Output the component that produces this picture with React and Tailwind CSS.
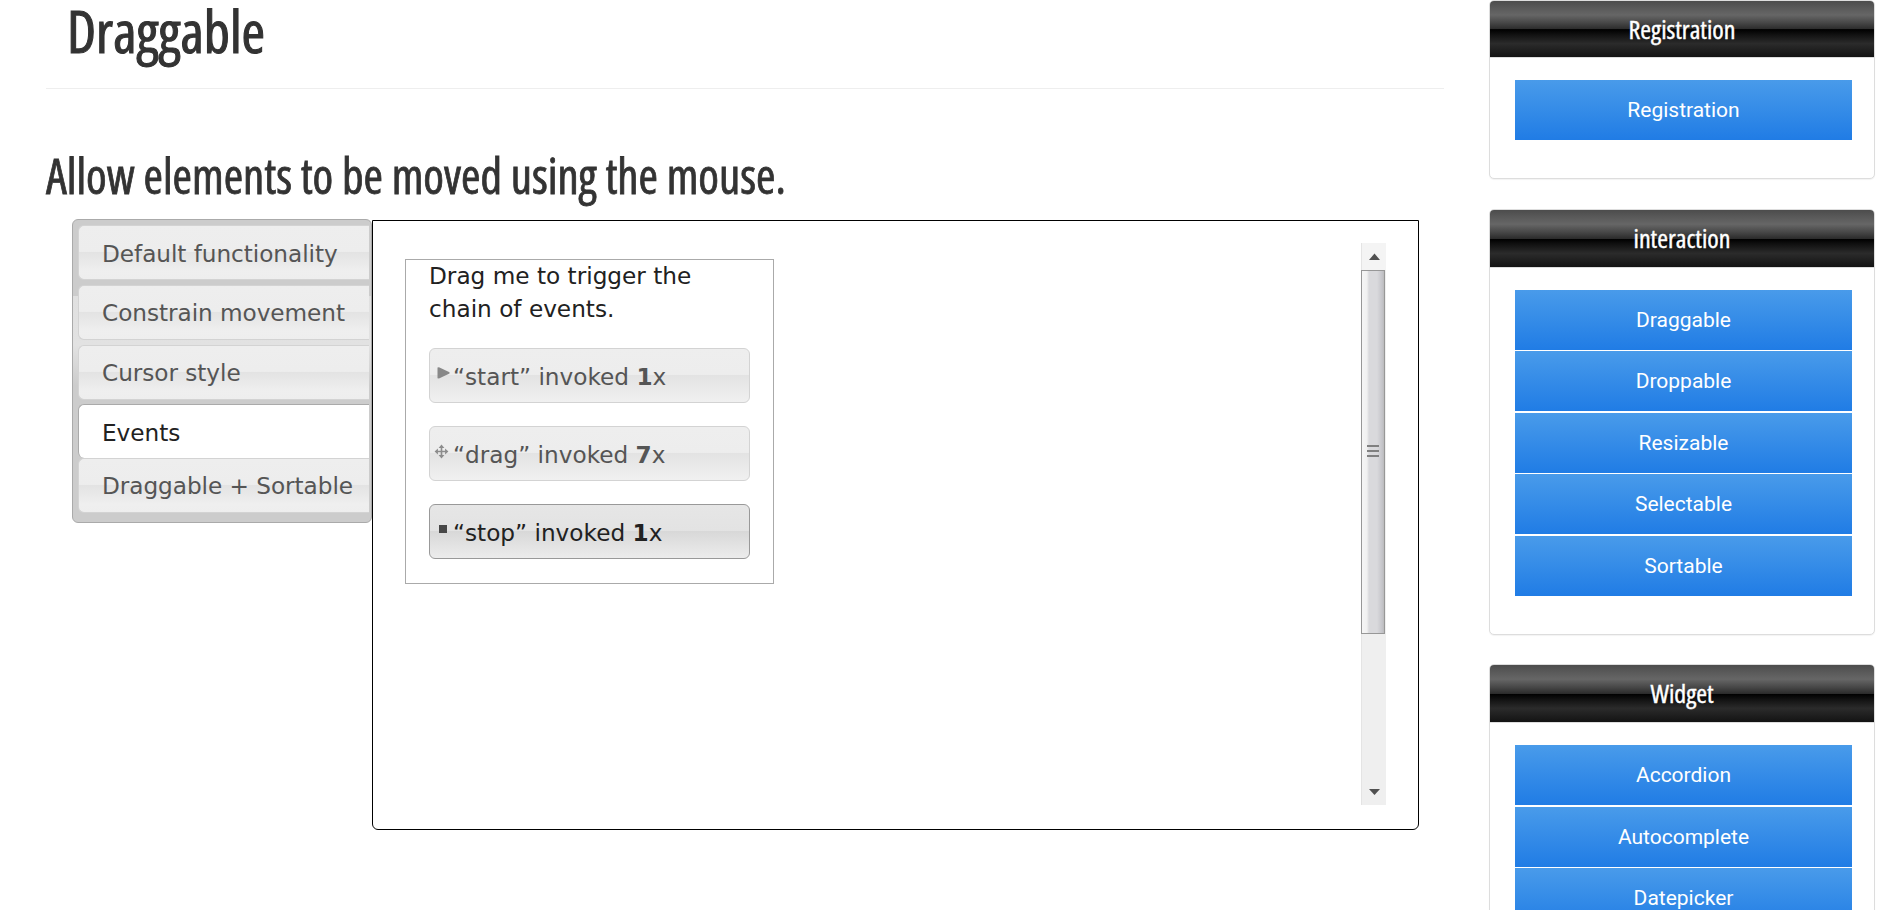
const tabs = [
  { label: "Default functionality", cls: "h-[55px] pt-[11px]" },
  { label: "Constrain movement", cls: "mt-[5px] h-[55px] pt-[10px]" },
  { label: "Cursor style", cls: "mt-[5px] h-[55px] pt-[10px]" },
  { label: "Events", cls: "mt-1 h-[54px] pt-[11px]", active: true },
  { label: "Draggable + Sortable", cls: "h-[55px] pt-[10px]" },
];

const PlayIcon = () => (
  <svg className="mt-[18px] ml-[7px] h-3 w-[13px]" viewBox="0 0 13 12">
    <path d="M0.5 0.5 L2 0.3 L12.5 5.2 V6.6 L2 11.5 L0.5 11.3 Z" fill="#888" />
  </svg>
);

const MoveIcon = () => (
  <svg className="mt-[17px] ml-[4px] h-[15px] w-[15px]" viewBox="0 0 15 15">
    <path d="M7.5 0.6 L10.4 3.9 H4.6 Z M7.5 14.4 L10.4 11.1 H4.6 Z M0.6 7.5 L3.9 4.6 V10.4 Z M14.4 7.5 L11.1 4.6 V10.4 Z" fill="#8c8c8c" />
    <path d="M7.5 3 V12 M3 7.5 H12" stroke="#8c8c8c" strokeWidth="1.6" />
  </svg>
);

const StopIcon = () => (
  <svg className="mt-[20px] ml-[9px] h-2 w-2" viewBox="0 0 8 8">
    <rect width="8" height="8" fill="#484848" />
  </svg>
);

const events = [
  { name: "start", count: 1, Icon: PlayIcon, cls: "mt-[23px]" },
  { name: "drag", count: 7, Icon: MoveIcon, cls: "mt-[23px]" },
  { name: "stop", count: 1, Icon: StopIcon, cls: "mt-[23px]", hover: true },
];

const panels = [
  { title: "Registration", cls: "h-[179px]", head: "h-[57px]", items: ["Registration"] },
  { title: "interaction", cls: "mt-[30px] h-[426px]", head: "h-[58px]", items: ["Draggable", "Droppable", "Resizable", "Selectable", "Sortable"] },
  { title: "Widget", cls: "mt-[29.1px] h-[600px]", head: "h-[58px]", items: ["Accordion", "Autocomplete", "Datepicker"] },
];

function Tab({ label, cls, active }) {
  const tone = active
    ? "border-t border-l border-[#aaa] bg-white text-[#212121]"
    : "border-y border-l border-[#d3d3d3] bg-[linear-gradient(#eee_0%,#ededed_48%,#e3e3e3_50%,#efefef_85%,#eee_100%)] text-[#555]";
  return (
    <div className={`${cls} ${tone} shrink-0 rounded-l-[6px] pl-[23px] text-[23.2px] leading-[33px] tracking-[-0.05px] whitespace-nowrap`}>
      {label}
    </div>
  );
}

function EventRow({ name, count, Icon, cls, hover }) {
  const tone = hover
    ? "border-[#999] bg-[linear-gradient(#e6e6e6_0%,#e3e3e3_48%,#d8d8d8_50%,#ececec_100%)] text-[#212121]"
    : "border-[#d3d3d3] bg-[linear-gradient(#eee_0%,#ededed_48%,#e3e3e3_50%,#f0f0f0_100%)] text-[#555]";
  return (
    <div className={`${cls} ${tone} flex h-[55px] w-[321px] rounded-[6px] border`}>
      <div className="w-[23px] shrink-0">
        <Icon />
      </div>
      <div className="pt-[11px] text-[23.2px] leading-[33px] whitespace-pre">
        “{name}” invoked <b>{count}</b>x
      </div>
    </div>
  );
}

function Scrollbar() {
  return (
    <div className="mt-[22px] flex h-[562px] w-[25px] flex-col border-l border-[#e4e4e4] bg-[#efefef]">
      <div className="flex h-[27px] items-start justify-center bg-[#f4f4f4] pt-[10px]">
        <svg className="h-[7px] w-[11px]" viewBox="0 0 11 7">
          <path d="M5.5 0.5 L11 7 H0 Z" fill="#505050" />
        </svg>
      </div>
      <div className="-ml-px flex h-[364px] w-[24px] flex-col justify-center gap-[3px] border border-[#979797] bg-[linear-gradient(90deg,#f5f5f5_0%,#f1f1f1_22%,#d9d9dc_32%,#d9d9dc_68%,#c4c4c9_92%,#bbb_100%)] pb-[3px] pl-[5px]">
        <div className="h-[2px] w-3 bg-[#808080]" />
        <div className="h-[2px] w-3 bg-[#808080]" />
        <div className="h-[2px] w-3 bg-[#808080]" />
      </div>
      <div className="flex flex-1 items-end justify-center pb-[10px]">
        <svg className="h-[6px] w-[11px]" viewBox="0 0 11 6">
          <path d="M0 0 H11 L5.5 6 Z" fill="#505050" />
        </svg>
      </div>
    </div>
  );
}

function Panel({ title, cls, head, items }) {
  return (
    <section className={`${cls} w-[386px] shrink-0 rounded-[5px] border border-[#ddd] bg-white shadow-[0_1px_1px_rgba(0,0,0,0.05)]`}>
      <h3 className={`${head} rounded-t-[4px] border-b border-[#ddd] bg-[linear-gradient(#4c4c4c_0%,#595959_12%,#666666_25%,#474747_39%,#2c2c2c_50%,#000000_51%,#111111_60%,#2b2b2b_76%,#1c1c1c_91%,#131313_100%)] bg-clip-padding text-center font-['Open_Sans',sans-serif] text-[26px] leading-[57px] text-white [-webkit-text-stroke:0.4px_white] [font-stretch:75%]`}>
        {title}
      </h3>
      <ul className="ml-[25px] flex w-[337px] flex-col gap-[1.44px] pt-[22px]">
        {items.map((item) => (
          <li
            key={item}
            className="h-[60px] shrink-0 bg-[linear-gradient(#499bea_0%,#207ce5_100%)] text-center font-['Roboto',sans-serif] text-[21px] leading-[60px] text-white"
          >
            {item}
          </li>
        ))}
      </ul>
    </section>
  );
}

export default function App() {
  return (
    <div className="flex h-[910px] w-[1894px] overflow-hidden bg-white font-['DejaVu_Sans',sans-serif]">
      <main className="ml-[46px] w-[1398px] shrink-0">
        <div className="h-[89px] border-b border-[#eee] pl-[21px]">
          <h1 className="origin-left scale-x-[0.965] font-['Open_Sans',sans-serif] text-[59px] leading-[61px] text-[#333] [-webkit-text-stroke:1.1px_#333] [font-stretch:75%]">
            Draggable
          </h1>
        </div>
        <h2 className="mt-[56px] origin-left scale-x-[0.94] font-['Open_Sans',sans-serif] text-[50px] leading-[60px] whitespace-nowrap text-[#333] [-webkit-text-stroke:0.8px_#333] [font-stretch:75%]">
          Allow elements to be moved using the mouse.
        </h2>
        <div className="mt-[14px] ml-[26px] flex items-start">
          <nav className="flex h-[304px] w-[300px] flex-col rounded-[6px] border border-[#aaa] bg-[linear-gradient(#ccc_0px,#ccc_76px,#e0e0e0_76px,#e2e2e2_125px,#ccc_165px,#ccc_100%)] pt-[5px] pr-[2px] pl-[5px]">
            {tabs.map((t) => (
              <Tab key={t.label} {...t} />
            ))}
          </nav>
          <div className="mt-px flex h-[610px] w-[1047px] justify-between rounded-[6px] rounded-t-none border border-black pr-[32px] pl-[32px]">
            <div className="mt-[38px] h-[325px] w-[369px] border border-[#aaa] pl-[23px]">
              <p className="-mt-px w-[300px] text-[23.2px] leading-[33px] text-[#212121]">
                Drag me to trigger the chain of events.
              </p>
              {events.map((e) => (
                <EventRow key={e.name} {...e} />
              ))}
            </div>
            <Scrollbar />
          </div>
        </div>
      </main>
      <aside className="ml-[45px] flex flex-col">
        {panels.map((p) => (
          <Panel key={p.title} {...p} />
        ))}
      </aside>
    </div>
  );
}
